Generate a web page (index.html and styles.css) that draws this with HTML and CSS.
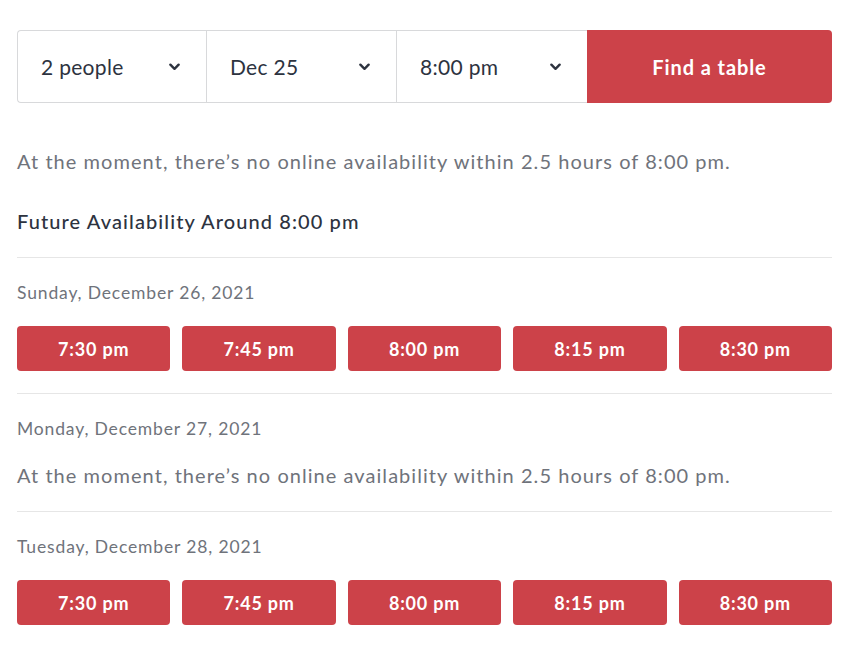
FILE: index.html
```html
<!DOCTYPE html>
<html>
<head>
<meta charset="utf-8">
<link rel="stylesheet" href="styles.css">
</head>
<body>
<div class="page">
  <div class="search">
    <div class="select"><span>2 people</span><svg class="chev" viewBox="0 0 12 8"><path d="M1.5 1.5 L6 6 L10.5 1.5" /></svg></div>
    <div class="select"><span>Dec 25</span><svg class="chev" viewBox="0 0 12 8"><path d="M1.5 1.5 L6 6 L10.5 1.5" /></svg></div>
    <div class="select"><span>8:00 pm</span><svg class="chev" viewBox="0 0 12 8"><path d="M1.5 1.5 L6 6 L10.5 1.5" /></svg></div>
    <button class="find">Find a table</button>
  </div>
  <p class="note first">At the moment, there’s no online availability within 2.5 hours of 8:00 pm.</p>
  <h2 class="heading">Future Availability Around 8:00 pm</h2>
  <section class="day">
    <div class="date">Sunday, December 26, 2021</div>
    <div class="slots">
      <button class="slot">7:30 pm</button>
      <button class="slot">7:45 pm</button>
      <button class="slot">8:00 pm</button>
      <button class="slot">8:15 pm</button>
      <button class="slot">8:30 pm</button>
    </div>
  </section>
  <section class="day">
    <div class="date">Monday, December 27, 2021</div>
    <p class="note">At the moment, there’s no online availability within 2.5 hours of 8:00 pm.</p>
  </section>
  <section class="day">
    <div class="date">Tuesday, December 28, 2021</div>
    <div class="slots">
      <button class="slot">7:30 pm</button>
      <button class="slot">7:45 pm</button>
      <button class="slot">8:00 pm</button>
      <button class="slot">8:15 pm</button>
      <button class="slot">8:30 pm</button>
    </div>
  </section>
</div>
</body>
</html>
```
FILE: styles.css
```css
* { box-sizing: border-box; }
html, body { margin: 0; padding: 0; background: #fff; }
body { font-family: Lato, "Noto Sans", sans-serif; color: #2d333f; }
.page { width: 815px; margin-left: 17px; padding-top: 30px; }
.search { display: flex; height: 73px; }
.select {
  flex: 0 0 190px;
  display: flex; align-items: center; justify-content: space-between;
  padding: 0 26px 0 23px;
  border: 1px solid #d8d9db; border-right: none;
  font-size: 21px; letter-spacing: 0.3px; color: #2d333f;
}
.select:first-child { flex-basis: 189px; border-radius: 4px 0 0 4px; }
.select:nth-child(3) { flex-basis: 191px; }
.chev { width: 11px; height: 8px; fill: none; stroke: #2d333f; stroke-width: 2.6; stroke-linecap: round; stroke-linejoin: round; }
.find {
  flex: 1; border: none; background: #cc4249; color: #fff;
  font-family: inherit; font-weight: 700; font-size: 20px; letter-spacing: 0.9px;
  border-radius: 0 4px 4px 0; padding: 0;
}
.note { margin: 0; font-size: 20px; line-height: 28px; color: #6f737b; letter-spacing: 1.05px; }
.note.first { margin-top: 44px; }
.heading { margin: 32px 0 22px; font-size: 20px; line-height: 28px; font-weight: 500; color: #2d333f; letter-spacing: 1.1px; }
.day { border-top: 1px solid #e6e6e6; padding: 23px 0 22px; }
.date { font-size: 17.5px; line-height: 24px; color: #6f737b; margin-bottom: 21px; letter-spacing: 0.85px; }
.day .note { margin-top: -1px; }
.slots { display: flex; gap: 12px; }
.slot {
  flex: 1; height: 45px; border: none; border-radius: 4px;
  background: #cc4249; color: #fff; padding: 0;
  font-family: inherit; font-weight: 700; font-size: 18px; letter-spacing: 0.8px;
}
```
